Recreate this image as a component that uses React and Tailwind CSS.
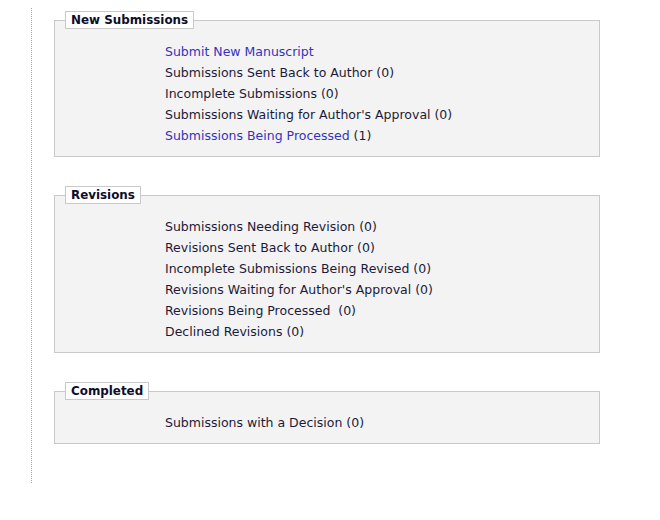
const sections = [
  {
    title: "New Submissions",
    items: [
      { link: "Submit New Manuscript" },
      { text: "Submissions Sent Back to Author (0)" },
      { text: "Incomplete Submissions (0)" },
      { text: "Submissions Waiting for Author's Approval (0)" },
      { link: "Submissions Being Processed", count: " (1)" },
    ],
  },
  {
    title: "Revisions",
    items: [
      { text: "Submissions Needing Revision (0)" },
      { text: "Revisions Sent Back to Author (0)" },
      { text: "Incomplete Submissions Being Revised (0)" },
      { text: "Revisions Waiting for Author's Approval (0)" },
      { text: "Revisions Being Processed  (0)" },
      { text: "Declined Revisions (0)" },
    ],
  },
  {
    title: "Completed",
    items: [{ text: "Submissions with a Decision (0)" }],
  },
];

function Section({ title, items, first }) {
  return (
    <fieldset
      className={`w-[546px] border border-[#c9c9c9] bg-[#f3f3f3] ${first ? "" : "mt-[29px]"}`}
    >
      <legend className="ml-[10px] h-[18px] border border-[#c9c9c9] bg-white px-[5px] pt-[1px] text-[11.9px] font-bold leading-[15px] text-[#0d0d2b]">
        {title}
      </legend>
      <ul className="pl-[110px] pt-[12px] pb-[10px]">
        {items.map((item, i) => (
          <li key={i} className="h-[21px] leading-[21px] whitespace-pre">
            {item.link ? (
              <>
                <a href="#" className="text-[#3333bb]">
                  {item.link}
                </a>
                {item.count}
              </>
            ) : (
              item.text
            )}
          </li>
        ))}
      </ul>
    </fieldset>
  );
}

export default function App() {
  return (
    <div
      className="h-[520px] w-[660px] bg-white pt-[8px] text-[12.5px] text-[#1c1a38]"
      style={{ fontFamily: '"DejaVu Sans", Verdana, sans-serif' }}
    >
      <div className="ml-[31px] border-l border-dotted border-[#a8a8a8] pl-[22px] pt-[3px] pb-[39px]">
        {sections.map((s, i) => (
          <Section key={s.title} {...s} first={i === 0} />
        ))}
      </div>
    </div>
  );
}
